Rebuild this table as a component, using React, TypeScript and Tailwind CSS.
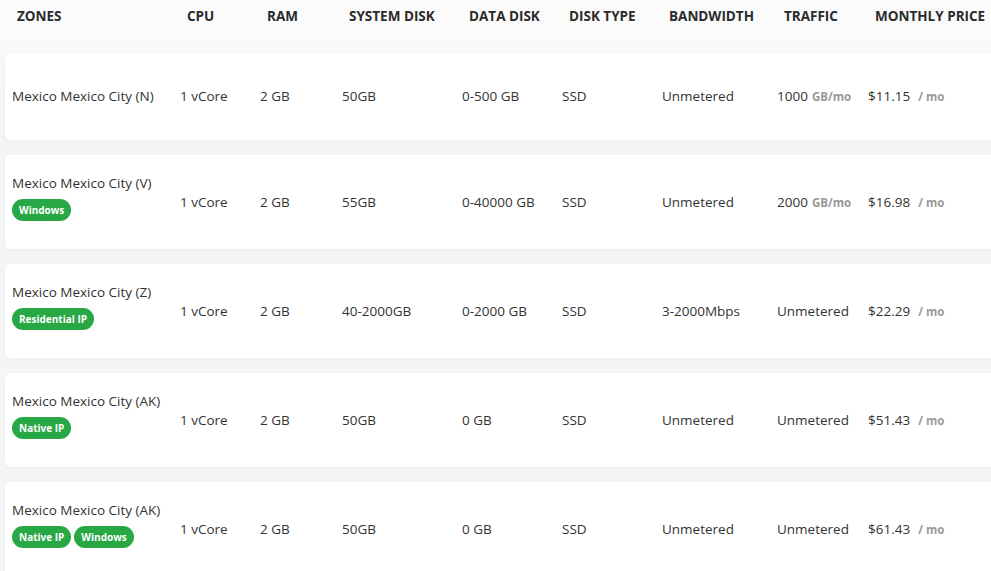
const headers = [
  'Zones',
  'CPU',
  'RAM',
  'System Disk',
  'Data Disk',
  'Disk Type',
  'Bandwidth',
  'Traffic',
  'Monthly Price',
];

type Plan = {
  zone: string;
  tags: string[];
  cpu: string;
  ram: string;
  sysDisk: string;
  dataDisk: string;
  diskType: string;
  bandwidth: string;
  traffic: string;
  trafficUnit?: boolean;
  price: string;
};

const plans: Plan[] = [
  {
    zone: 'Mexico Mexico City (N)',
    tags: [],
    cpu: '1 vCore',
    ram: '2 GB',
    sysDisk: '50GB',
    dataDisk: '0-500 GB',
    diskType: 'SSD',
    bandwidth: 'Unmetered',
    traffic: '1000',
    trafficUnit: true,
    price: '$11.15',
  },
  {
    zone: 'Mexico Mexico City (V)',
    tags: ['Windows'],
    cpu: '1 vCore',
    ram: '2 GB',
    sysDisk: '55GB',
    dataDisk: '0-40000 GB',
    diskType: 'SSD',
    bandwidth: 'Unmetered',
    traffic: '2000',
    trafficUnit: true,
    price: '$16.98',
  },
  {
    zone: 'Mexico Mexico City (Z)',
    tags: ['Residential IP'],
    cpu: '1 vCore',
    ram: '2 GB',
    sysDisk: '40-2000GB',
    dataDisk: '0-2000 GB',
    diskType: 'SSD',
    bandwidth: '3-2000Mbps',
    traffic: 'Unmetered',
    price: '$22.29',
  },
  {
    zone: 'Mexico Mexico City (AK)',
    tags: ['Native IP'],
    cpu: '1 vCore',
    ram: '2 GB',
    sysDisk: '50GB',
    dataDisk: '0 GB',
    diskType: 'SSD',
    bandwidth: 'Unmetered',
    traffic: 'Unmetered',
    price: '$51.43',
  },
  {
    zone: 'Mexico Mexico City (AK)',
    tags: ['Native IP', 'Windows'],
    cpu: '1 vCore',
    ram: '2 GB',
    sysDisk: '50GB',
    dataDisk: '0 GB',
    diskType: 'SSD',
    bandwidth: 'Unmetered',
    traffic: 'Unmetered',
    price: '$61.43',
  },
];

const cols = 'grid grid-cols-[168px_80px_82px_120px_100px_100px_115px_91px_1fr]';

const App = () => {
  return (
    <div className="min-h-[571px] w-[991px] overflow-hidden bg-[#f4f5f7] font-['Open_Sans',sans-serif] text-[#333]">
      <div className={`${cols} h-[32px] items-center bg-[#fbfbfb] pl-[5px] text-[13.5px] font-bold uppercase text-[#2b2b2b]`}>
        {headers.map((h, i) => (
          <div key={h} className={`whitespace-nowrap ${i === 0 ? 'pl-[12px]' : 'pl-[14px]'}`}>
            {h}
          </div>
        ))}
      </div>

      <div className="flex flex-col gap-[15px] bg-gradient-to-b from-[#fbfbfb] to-[#f4f5f7] to-[60px] pt-[21px] pl-[5px]">
        {plans.map((p, key) => (
          <div
            key={key}
            className={`${cols} -mr-4 items-center rounded-[5px] bg-white text-[13.5px] shadow-[0_1px_4px_rgba(0,0,0,0.04)] ${
              p.tags.length ? 'h-[94px]' : 'h-[87px]'
            }`}
          >
            <div className={`pl-[7px] ${p.tags.length ? 'pb-[10px]' : ''}`}>
              <p className="whitespace-nowrap">{p.zone}</p>
              {p.tags.length > 0 && (
                <div className="mt-[5px] flex gap-[3px]">
                  {p.tags.map((t) => (
                    <span
                      key={t}
                      className="rounded-full bg-[#28a745] px-[7px] py-[3px] text-[10px] leading-[16px] font-bold text-white"
                    >
                      {t}
                    </span>
                  ))}
                </div>
              )}
            </div>
            <div className="pl-[7px]">{p.cpu}</div>
            <div className="pl-[7px]">{p.ram}</div>
            <div className="pl-[7px]">{p.sysDisk}</div>
            <div className="pl-[7px]">{p.dataDisk}</div>
            <div className="pl-[7px]">{p.diskType}</div>
            <div className="pl-[7px]">{p.bandwidth}</div>
            <div className="whitespace-nowrap pl-[7px]">
              {p.traffic}
              <span className={p.trafficUnit ? 'ml-[4px] text-[11.5px] font-bold text-[#999]' : 'hidden'}>
                GB/mo
              </span>
            </div>
            <div className="whitespace-nowrap pl-[7px]">
              {p.price}
              <span className="ml-[8px] text-[11.5px] font-bold text-[#999]">/ mo</span>
            </div>
          </div>
        ))}
      </div>
    </div>
  );
};

export default App;
